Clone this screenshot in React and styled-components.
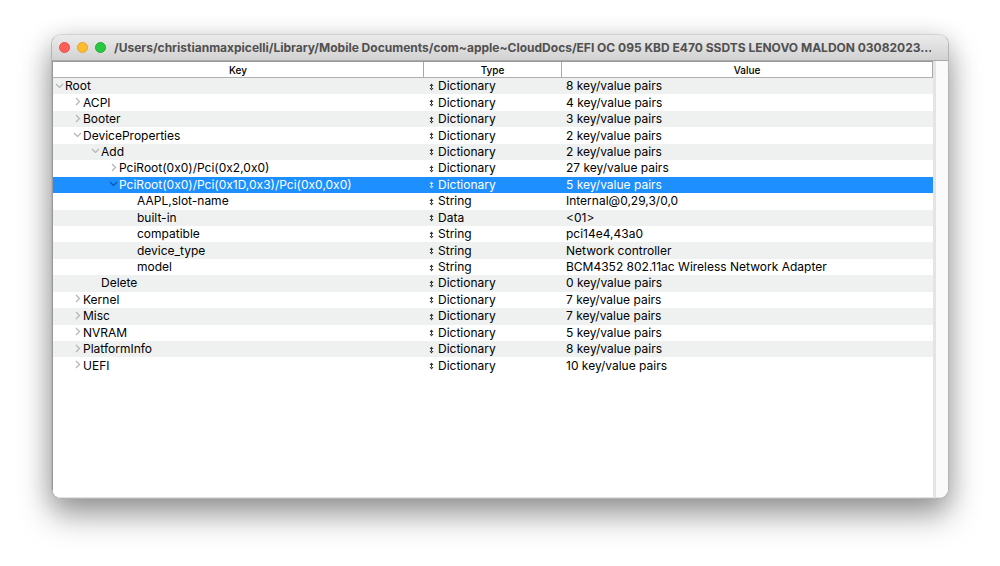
import React from "react";
import styled, { createGlobalStyle } from "styled-components";

const GlobalStyle = createGlobalStyle`
  *, *::before, *::after { box-sizing: border-box; }
  body {
    margin: 0;
    background: #fff;
    color: #000;
    font-family: Inter, "Liberation Sans", sans-serif;
    font-size: 12px;
  }
`;

const Desktop = styled.main`
  display: flex;
  min-height: 100vh;
  padding: 34px 51px 67px;
`;

const Window = styled.section`
  flex: 1;
  min-width: 0;
  display: flex;
  flex-direction: column;
  border-radius: 10px;
  overflow: hidden;
  background: #fff;
  border: 1px solid #b4b4b4;
  border-top-color: #d2d2d2;
  box-shadow: 0 16px 32px rgba(0, 0, 0, 0.38), 0 4px 24px rgba(0, 0, 0, 0.12);
`;

const TitleBar = styled.header`
  display: flex;
  align-items: center;
  gap: 8px;
  height: 26px;
  padding: 0 17px 0 7px;
  background: linear-gradient(#ebebeb, #d2d2d2);
  border-bottom: 1px solid #aaa;
`;

const Lights = styled.div`
  display: flex;
  gap: 7px;
`;

const Light = styled.button`
  width: 11px;
  height: 11px;
  padding: 0;
  border: 1px solid ${(p) => p.$edge};
  border-radius: 50%;
  background: ${(p) => p.$fill};
`;

const Title = styled.h1`
  flex: 1;
  min-width: 0;
  margin: 0;
  overflow: hidden;
  white-space: nowrap;
  font-size: 12px;
  line-height: 16px;
  font-weight: 700;
  color: #505050;
`;

const Body = styled.div`
  flex: 1;
  display: flex;
  border-left: 1px solid #999;
  border-bottom: 1px solid #e2e2e2;
`;

const Outline = styled.div`
  flex: 1;
  min-width: 0;
  border-top: 1px solid #999;
`;

const ScrollTrack = styled.div`
  width: 15px;
  background: #fafafa;
  border-left: 3px solid #e4e4e4;
`;

const Table = styled.table`
  width: 100%;
  height: 312px;
  table-layout: fixed;
  border-collapse: separate;
  border-spacing: 0;
`;

const HeadCell = styled.th`
  width: ${(p) => p.$width || "auto"};
  height: 16px;
  padding: 0;
  background: #fff;
  border-right: 1px solid #a8a8a8;
  border-bottom: 1px solid #b0b0b0;
  font-size: 10px;
  line-height: 14px;
  font-weight: 500;
`;

const Row = styled.tr`
  background: ${(p) => (p.$selected ? "#1e8fff" : p.$striped ? "#eff1f1" : "#fff")};
  color: ${(p) => (p.$selected ? "#fff" : "inherit")};
`;

const Cell = styled.td`
  padding: 0 0 0 4px;
  line-height: 16px;
  white-space: nowrap;
  overflow: hidden;
`;

const KeyCell = styled(Cell)`
  padding-left: ${(p) => 2 + p.$level * 18}px;
`;

const KeyLine = styled.div`
  display: flex;
  align-items: center;
`;

const Disclosure = styled.button`
  display: flex;
  width: 10px;
  height: 14px;
  padding: 0 0 2px;
  align-items: center;
  border: 0;
  background: none;
  color: ${(p) => (p.$selected ? "#0a55b0" : "#b4b4b4")};
`;

const LeafSpace = styled.span`
  width: 10px;
`;

const TypePicker = styled.label`
  display: flex;
  align-items: center;
  gap: 3px;
`;

const TypeSelect = styled.select`
  appearance: none;
  padding: 0;
  border: 0;
  background: none;
  color: inherit;
  font: inherit;
  line-height: 16px;
  height: 16px;
`;

const TYPES = ["Dictionary", "Array", "String", "Data", "Number", "Boolean", "Date"];

const ROWS = [
  { key: "Root", level: 0, state: "open", type: "Dictionary", value: "8 key/value pairs" },
  { key: "ACPI", level: 1, state: "closed", type: "Dictionary", value: "4 key/value pairs" },
  { key: "Booter", level: 1, state: "closed", type: "Dictionary", value: "3 key/value pairs" },
  { key: "DeviceProperties", level: 1, state: "open", type: "Dictionary", value: "2 key/value pairs" },
  { key: "Add", level: 2, state: "open", type: "Dictionary", value: "2 key/value pairs" },
  { key: "PciRoot(0x0)/Pci(0x2,0x0)", level: 3, state: "closed", type: "Dictionary", value: "27 key/value pairs" },
  { key: "PciRoot(0x0)/Pci(0x1D,0x3)/Pci(0x0,0x0)", level: 3, state: "open", type: "Dictionary", value: "5 key/value pairs", selected: true },
  { key: "AAPL,slot-name", level: 4, type: "String", value: "Internal@0,29,3/0,0" },
  { key: "built-in", level: 4, type: "Data", value: "<01>" },
  { key: "compatible", level: 4, type: "String", value: "pci14e4,43a0" },
  { key: "device_type", level: 4, type: "String", value: "Network controller" },
  { key: "model", level: 4, type: "String", value: "BCM4352 802.11ac Wireless Network Adapter" },
  { key: "Delete", level: 2, type: "Dictionary", value: "0 key/value pairs" },
  { key: "Kernel", level: 1, state: "closed", type: "Dictionary", value: "7 key/value pairs" },
  { key: "Misc", level: 1, state: "closed", type: "Dictionary", value: "7 key/value pairs" },
  { key: "NVRAM", level: 1, state: "closed", type: "Dictionary", value: "5 key/value pairs" },
  { key: "PlatformInfo", level: 1, state: "closed", type: "Dictionary", value: "8 key/value pairs" },
  { key: "UEFI", level: 1, state: "closed", type: "Dictionary", value: "10 key/value pairs" },
];

function Chevron({ open }) {
  return (
    <svg width="9" height="9" viewBox="0 0 9 9" fill="none" stroke="currentColor" strokeWidth="1.2" aria-hidden="true">
      <path d={open ? "M1 3 L4.5 6.5 L8 3" : "M3 1 L6.5 4.5 L3 8"} />
    </svg>
  );
}

function UpDown() {
  return (
    <svg width="7" height="9" viewBox="0 0 7 9" aria-hidden="true">
      <path d="M3.5 1.5 L5.5 4 H1.5 Z M3.5 8.5 L5.5 6 H1.5 Z M3 3.5 H4 V6.5 H3 Z" fill="currentColor" opacity="0.8" />
    </svg>
  );
}

export default function App() {
  return (
    <>
      <GlobalStyle />
      <Desktop>
        <Window>
          <TitleBar>
            <Lights>
              <Light type="button" aria-label="Close" $fill="#ff5f57" $edge="#e9504a" />
              <Light type="button" aria-label="Minimize" $fill="#febc2e" $edge="#e5a528" />
              <Light type="button" aria-label="Zoom" $fill="#28c840" $edge="#20ae34" />
            </Lights>
            <Title>
              /Users/christianmaxpicelli/Library/Mobile Documents/com~apple~CloudDocs/EFI OC 095 KBD E470 SSDTS LENOVO MALDON 03082023...
            </Title>
          </TitleBar>
          <Body>
            <Outline>
              <Table>
                <thead>
                  <tr>
                    <HeadCell scope="col">Key</HeadCell>
                    <HeadCell scope="col" $width="138px">Type</HeadCell>
                    <HeadCell scope="col">Value</HeadCell>
                  </tr>
                </thead>
                <tbody>
                  {ROWS.map((row, i) => (
                    <Row key={row.key} $striped={i % 2 === 0} $selected={row.selected}>
                      <KeyCell $level={row.level}>
                        <KeyLine>
                          {row.state ? (
                            <Disclosure type="button" aria-label={`Toggle ${row.key}`} aria-expanded={row.state === "open"} $selected={row.selected}>
                              <Chevron open={row.state === "open"} />
                            </Disclosure>
                          ) : (
                            <LeafSpace />
                          )}
                          {row.key}
                        </KeyLine>
                      </KeyCell>
                      <Cell>
                        <TypePicker>
                          <UpDown />
                          <TypeSelect aria-label={`Type of ${row.key}`} defaultValue={row.type}>
                            {TYPES.map((type) => (
                              <option key={type}>{type}</option>
                            ))}
                          </TypeSelect>
                        </TypePicker>
                      </Cell>
                      <Cell>{row.value}</Cell>
                    </Row>
                  ))}
                </tbody>
              </Table>
            </Outline>
            <ScrollTrack />
          </Body>
        </Window>
      </Desktop>
    </>
  );
}
